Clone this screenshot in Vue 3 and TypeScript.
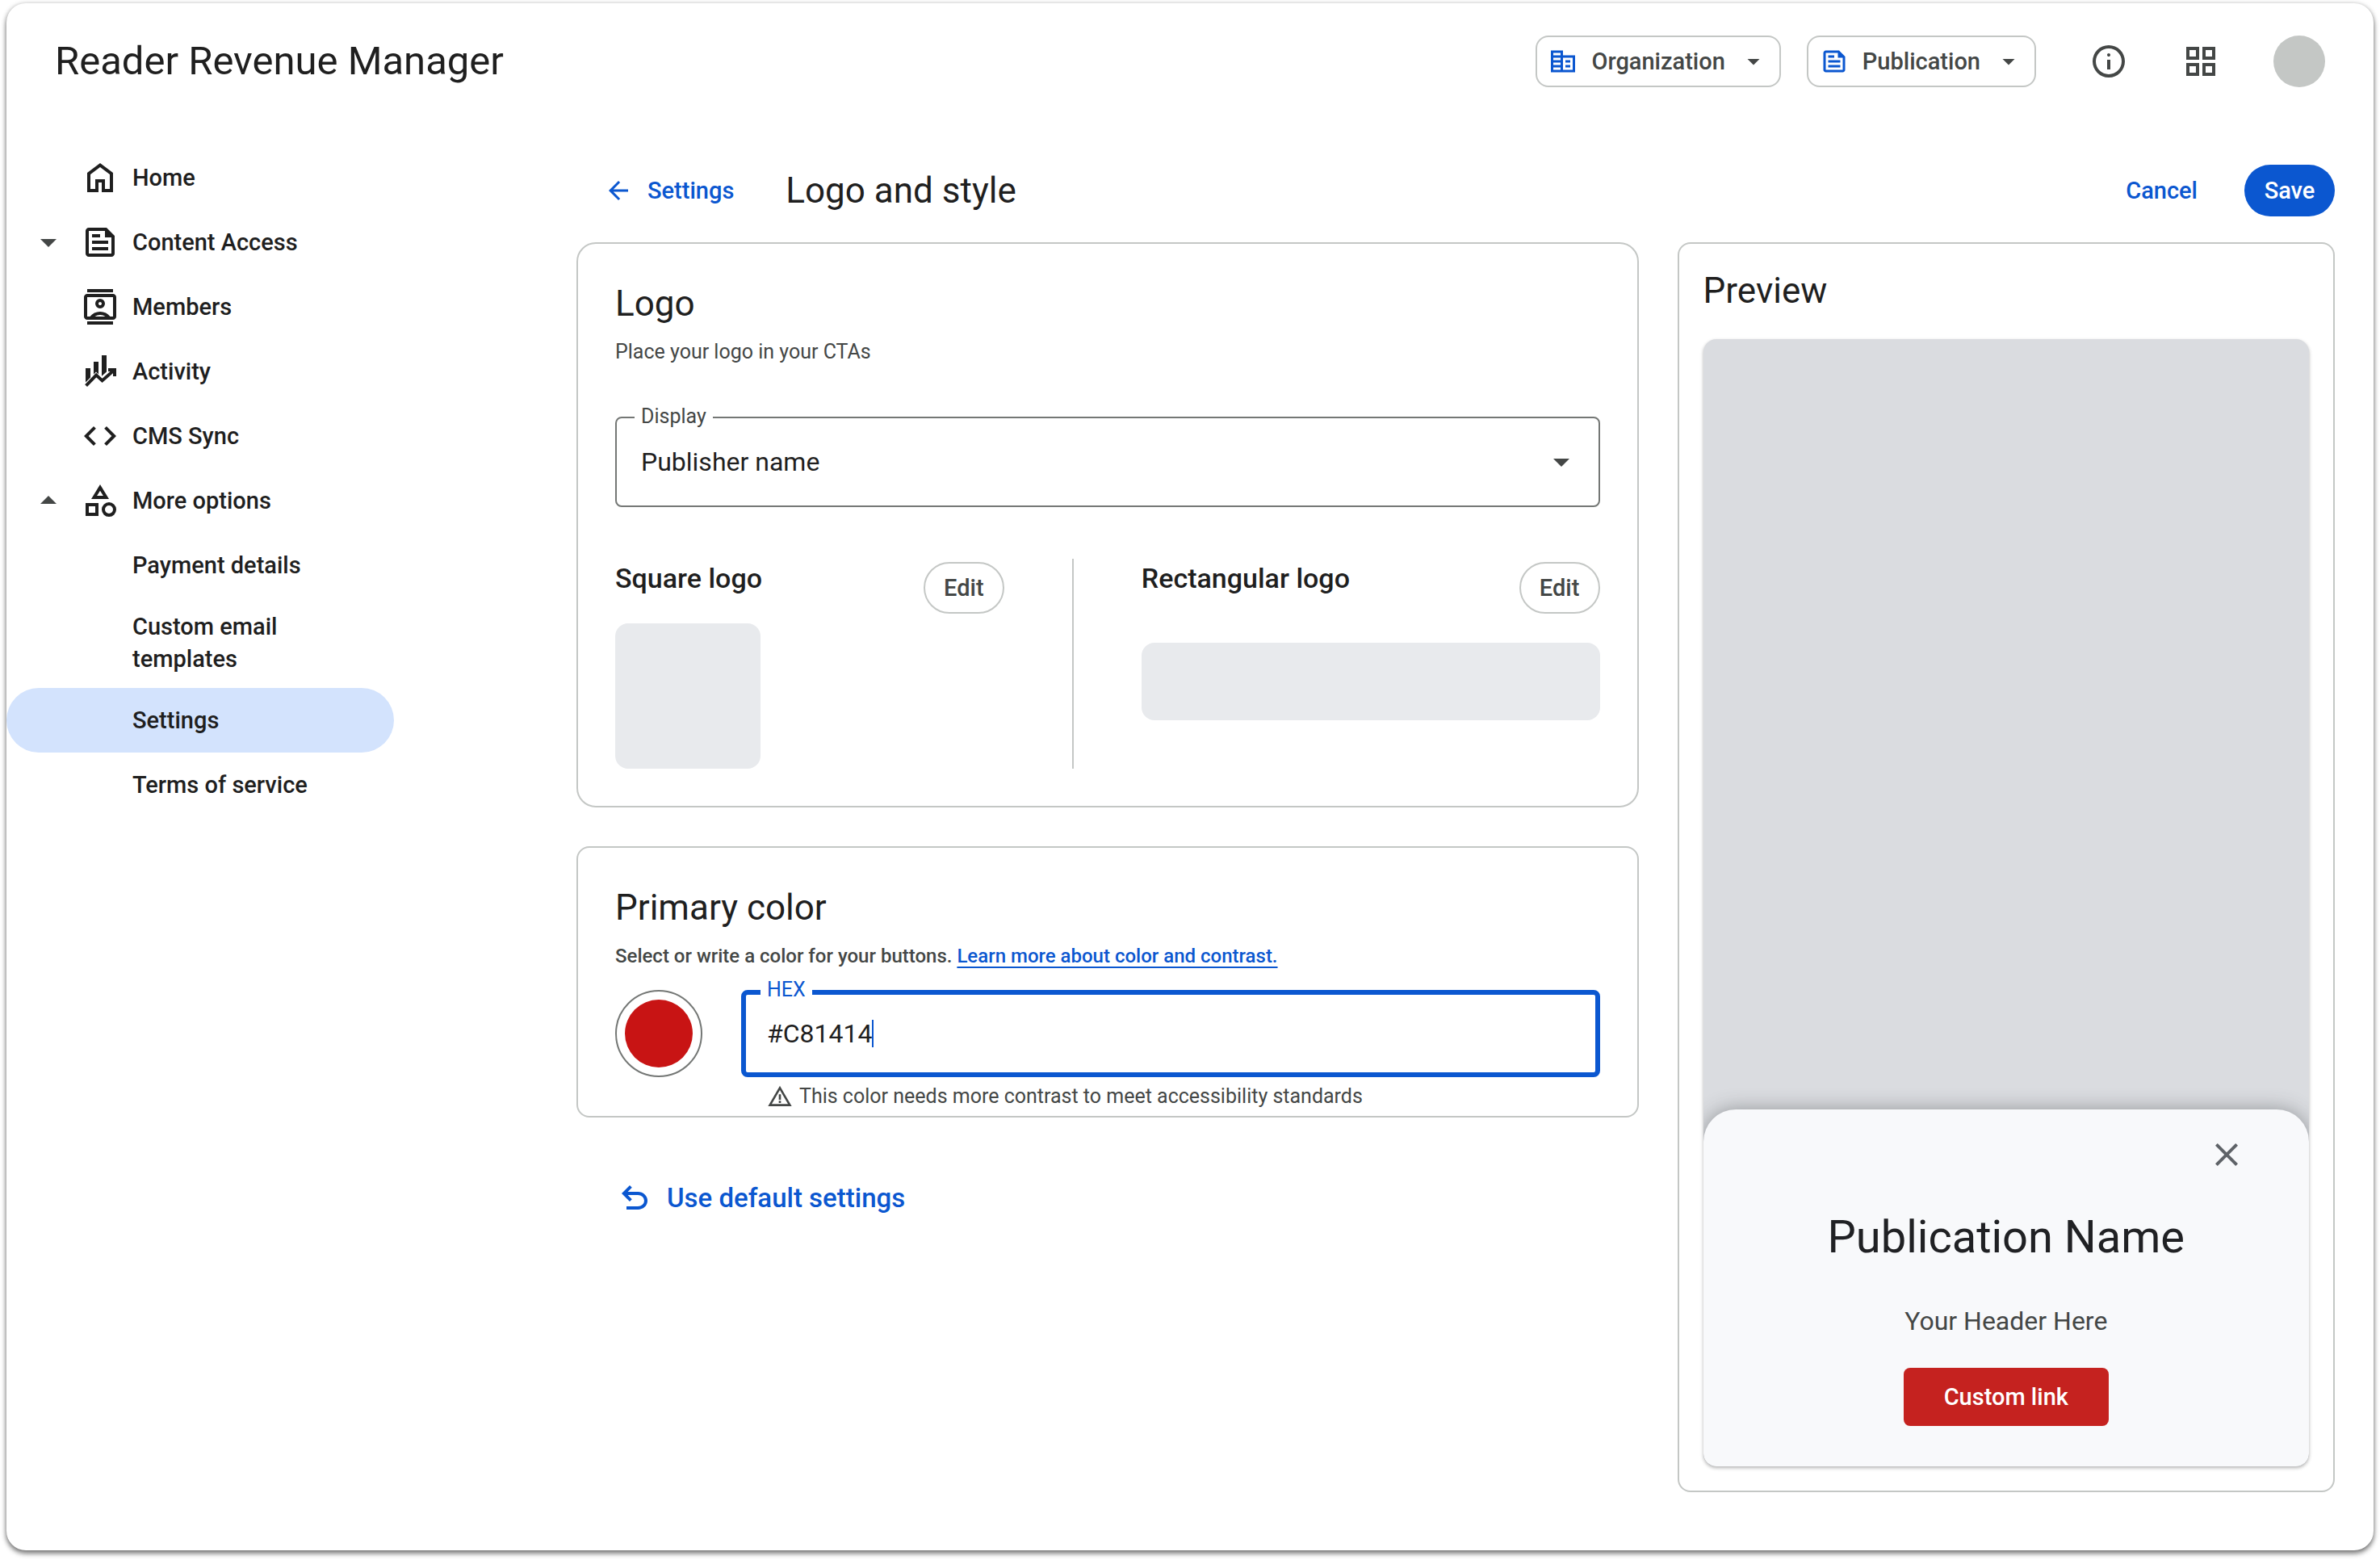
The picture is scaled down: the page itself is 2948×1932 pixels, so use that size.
<script setup lang="ts">
import { ref } from 'vue'

interface NavItem {
  label: string
  icon?: string
  stroke?: string
  arrow?: 'down' | 'up'
  active?: boolean
}

const icons = {
  home: 'M6 19h3v-6h6v6h3v-9l-6-4.5L6 10zm-2 2V9l8-6 8 6v12h-7v-6h-2v6z',
  feed: 'M16 3H5q-.83 0-1.41.59T3 5v14q0 .83.59 1.41T5 21h14q.83 0 1.41-.59T21 19V8zm3 16H5V5h10v4h4zM7 17h10v-2H7zm5-10H7v2h5zm-5 6h10v-2H7z',
  contacts:
    'M4 23v-2h16v2zM4 3V1h16v2zm8 10q1.25 0 2.125-.875T15 10t-.875-2.125T12 7t-2.125.875T9 10t.875 2.125T12 13m-8 7q-.825 0-1.412-.587T2 18V6q0-.825.588-1.412T4 4h16q.825 0 1.413.588T22 6v12q0 .825-.587 1.413T20 20zm1.75-2q1.125-1.4 2.725-2.2T12 15t3.525.8T18.25 18H20V6H4v12zm2.95 0h6.6q-.725-.475-1.55-.737T12 17t-1.75.263T8.7 18M12 11q-.425 0-.712-.288T11 10t.288-.712T12 9t.713.288T13 10t-.288.713T12 11',
  finance: 'M3 18.7V10h3v5.7zM8 13.7V6h3v7.7l-1.5-1.4zM13 14.9V2h3v10.2zM17 10h5v5h-2v-3h-3z',
  code: 'M8 18l-6-6 6-6 1.425 1.425-4.6 4.6L9.4 16.6zm8 0-1.425-1.425 4.6-4.6L14.6 7.4 16 6l6 6z',
  category:
    'M6.5 11 12 2l5.5 9zm11 11q-1.875 0-3.187-1.312T13 17.5t1.313-3.187T17.5 13t3.188 1.313T22 17.5t-1.312 3.188T17.5 22M3 21.5v-8h8v8zM17.5 20q1.05 0 1.775-.725T20 17.5t-.725-1.775T17.5 15t-1.775.725T15 17.5t.725 1.775T17.5 20M5 19.5h4v-4H5zM10.05 9h3.9L12 5.85z',
  domain:
    'M2 21V3h10v4h10v14zm2-2h6v-2H4zm0-4h6v-2H4zm0-4h6V9H4zm0-4h6V5H4zm8 12h8V9h-8zm2-6v-2h4v2zm0 4v-2h4v2z',
  info: 'M11 17h2v-6h-2zm1-8q.425 0 .713-.288T13 8t-.288-.712T12 7t-.712.288T11 8t.288.713T12 9m0 13q-2.075 0-3.9-.788t-3.175-2.137T2.788 15.9 2 12t.788-3.9 2.137-3.175T8.1 2.788 12 2t3.9.788 3.175 2.137T21.213 8.1 22 12t-.788 3.9-2.137 3.175-3.175 2.138T12 22m0-2q3.35 0 5.675-2.325T20 12t-2.325-5.675T12 4 6.325 6.325 4 12t2.325 5.675T12 20',
  grid: 'M3 11V3h8v8zm0 10v-8h8v8zm10-10V3h8v8zm0 10v-8h8v8zM5 9h4V5H5zm10 0h4V5h-4zm0 10h4v-4h-4zM5 19h4v-4H5z',
  back: 'm7.825 13 5.6 5.6L12 20l-8-8 8-8 1.425 1.4-5.6 5.6H20v2z',
  undo: 'M7 19v-2h7.1q1.575 0 2.738-1T18 13.5T16.838 11 14.1 10H7.8l2.6 2.6L9 14 4 9l5-5 1.4 1.4L7.8 8h6.3q2.425 0 4.163 1.575T20 13.5t-1.737 3.925T14.1 19z',
  warning: 'M1 21 12 2l11 19zm3.45-2h15.1L12 6zM11 18h2v-2h-2zm0-3h2v-5h-2z',
  close: 'M6.4 19 5 17.6l5.6-5.6L5 6.4 6.4 5l5.6 5.6L17.6 5 19 6.4 13.4 12l5.6 5.6-1.4 1.4-5.6-5.6z',
  down: 'm12 15-5-5h10z',
  up: 'm7 14 5-5 5 5z',
}

const nav: NavItem[] = [
  { label: 'Home', icon: icons.home },
  { label: 'Content Access', icon: icons.feed, arrow: 'down' },
  { label: 'Members', icon: icons.contacts },
  { label: 'Activity', icon: icons.finance, stroke: 'M3.3 20.8 9.6 14.3l3.7 3.4L21 10.9' },
  { label: 'CMS Sync', icon: icons.code },
  { label: 'More options', icon: icons.category, arrow: 'up' },
  { label: 'Payment details' },
  { label: 'Custom email templates' },
  { label: 'Settings', active: true },
  { label: 'Terms of service' },
]

const display = ref('Publisher name')
const hex = ref('#C81414')
</script>

<template>
  <div class="window">
    <header class="topbar">
      <h1>Reader Revenue Manager</h1>
      <button class="picker" type="button">
        <svg class="i36 blue" viewBox="0 0 24 24"><path :d="icons.domain" /></svg>
        <span>Organization</span>
        <svg class="i36" viewBox="0 0 24 24"><path :d="icons.down" /></svg>
      </button>
      <button class="picker" type="button">
        <svg class="i36 blue" viewBox="0 0 24 24"><path :d="icons.feed" /></svg>
        <span>Publication</span>
        <svg class="i36" viewBox="0 0 24 24"><path :d="icons.down" /></svg>
      </button>
      <div class="tools">
        <button class="bare" type="button" aria-label="Information">
          <svg class="i48" viewBox="0 0 24 24"><path :d="icons.info" /></svg>
        </button>
        <button class="bare" type="button" aria-label="Apps">
          <svg class="i48" viewBox="0 0 24 24"><path :d="icons.grid" /></svg>
        </button>
        <button class="bare avatar" type="button" aria-label="Account"></button>
      </div>
    </header>

    <div class="body">
      <nav>
        <a v-for="item in nav" :key="item.label" href="#" :class="['nav-item', { active: item.active }]">
          <span class="slot">
            <svg v-if="item.arrow" class="i48 muted" viewBox="0 0 24 24"><path :d="icons[item.arrow]" /></svg>
          </span>
          <span class="slot">
            <svg v-if="item.icon" class="i48" viewBox="0 0 24 24">
              <path :d="item.icon" />
              <path v-if="item.stroke" :d="item.stroke" fill="none" stroke="currentColor" stroke-width="2" />
            </svg>
          </span>
          <span class="nav-label">{{ item.label }}</span>
        </a>
      </nav>

      <main>
        <div class="page-head">
          <a class="back" href="#">
            <svg class="i36" viewBox="0 0 24 24"><path :d="icons.back" /></svg>
            <span>Settings</span>
          </a>
          <h2>Logo and style</h2>
          <button class="bare cancel" type="button">Cancel</button>
          <button class="save" type="button">Save</button>
        </div>

        <div class="columns">
          <div class="forms">
            <section class="card logo-card">
              <h2>Logo</h2>
              <p class="note">Place your logo in your CTAs</p>

              <div class="field display-field">
                <label for="display">Display</label>
                <select id="display" v-model="display">
                  <option>Publisher name</option>
                </select>
                <svg class="i48 muted" viewBox="0 0 24 24"><path :d="icons.down" /></svg>
              </div>

              <div class="logos">
                <div class="square">
                  <div class="logo-head">
                    <h3>Square logo</h3>
                    <button class="edit" type="button">Edit</button>
                  </div>
                  <div class="swatch-square"></div>
                </div>
                <div class="divider"></div>
                <div class="rect">
                  <div class="logo-head">
                    <h3>Rectangular logo</h3>
                    <button class="edit" type="button">Edit</button>
                  </div>
                  <div class="swatch-rect"></div>
                </div>
              </div>
            </section>

            <section class="card color-card">
              <h2>Primary color</h2>
              <p class="note medium">
                Select or write a color for your buttons.
                <a href="#">Learn more about color and contrast.</a>
              </p>
              <div class="color-row">
                <button class="color-dot" type="button" aria-label="Pick a color">
                  <span :style="{ background: hex }"></span>
                </button>
                <div class="color-input">
                  <div class="field hex-field">
                    <label for="hex">HEX</label>
                    <input id="hex" v-model="hex" type="text" spellcheck="false" />
                    <span class="caret"></span>
                  </div>
                  <p class="helper">
                    <svg viewBox="0 0 24 24"><path :d="icons.warning" /></svg>
                    <span>This color needs more contrast to meet accessibility standards</span>
                  </p>
                </div>
              </div>
            </section>

            <button class="bare reset" type="button">
              <svg class="i48" viewBox="0 0 24 24"><path :d="icons.undo" /></svg>
              <span>Use default settings</span>
            </button>
          </div>

          <section class="card preview">
            <h2>Preview</h2>
            <div class="phone">
              <div class="sheet">
                <button class="bare close" type="button" aria-label="Close">
                  <svg class="i48" viewBox="0 0 24 24"><path :d="icons.close" /></svg>
                </button>
                <h3>Publication Name</h3>
                <p>Your Header Here</p>
                <button class="cta" type="button">Custom link</button>
              </div>
            </div>
          </section>
        </div>
      </main>
    </div>
  </div>
</template>

<style>
html,
body {
  background: #fff;
}
#app {
  display: flow-root;
}
</style>

<style scoped>
.window,
.window * {
  box-sizing: border-box;
}
.window {
  display: flex;
  flex-direction: column;
  min-height: calc(100vh - 16px);
  margin: 4px 8px 12px;
  border-radius: 24px;
  background: #fff;
  box-shadow: 0 4px 6px rgba(0, 0, 0, 0.45), 0 1px 6px rgba(0, 0, 0, 0.25);
  color: #1f1f1f;
  font-family: Roboto, "Liberation Sans", sans-serif;
  font-size: 29px;
  font-weight: 500;
  line-height: 40px;
}
h1,
h2,
h3,
p {
  margin: 0;
  font-weight: 400;
}
button,
input,
select {
  font: inherit;
  color: inherit;
}
button {
  cursor: pointer;
}
a {
  color: #0b57d0;
  text-decoration: none;
}
svg {
  display: block;
  flex: none;
  fill: currentColor;
}
.i36 {
  width: 36px;
  height: 36px;
}
.i48 {
  width: 48px;
  height: 48px;
}
.blue {
  color: #0b57d0;
}
.muted {
  color: #444746;
}
.bare {
  border: 0;
  padding: 0;
  background: none;
}

/* Top bar */
.topbar {
  display: flex;
  align-items: center;
  padding: 40px 60px 0;
  color: #444746;
}
h1 {
  flex: 1;
  color: #1f1f1f;
  font-size: 49px;
  line-height: 64px;
}
.picker {
  display: flex;
  align-items: center;
  gap: 17px;
  height: 64px;
  margin-right: 32px;
  padding: 0 14px;
  border: 2px solid #c4c7c5;
  border-radius: 16px;
  background: none;
}
.tools {
  display: flex;
  align-items: center;
  gap: 66px;
  margin-left: 34px;
}
.avatar {
  width: 64px;
  height: 64px;
  border-radius: 50%;
  background: #c4c7c5;
}

/* Navigation */
.body {
  flex: 1;
  display: flex;
}
nav {
  flex: none;
  width: 480px;
  padding-top: 72px;
}
.nav-item {
  display: flex;
  align-items: center;
  gap: 16px;
  min-height: 80px;
  padding: 16px 80px 16px 28px;
  border-radius: 40px;
  color: #1f1f1f;
}
.nav-item.active {
  background: #d3e3fd;
}
.slot {
  flex: none;
  width: 48px;
}

/* Page */
main {
  flex: 1;
  display: flex;
  flex-direction: column;
  padding: 96px 48px 72px 226px;
}
h2 {
  font-size: 44px;
  line-height: 56px;
}
.page-head {
  display: flex;
  align-items: center;
  height: 64px;
  padding-left: 34px;
}
.page-head h2 {
  flex: 1;
  margin-left: 64px;
}
.back {
  display: flex;
  align-items: center;
  gap: 18px;
}
.cancel {
  margin-right: 58px;
  color: #0b57d0;
}
.save {
  width: 112px;
  height: 64px;
  border: 0;
  border-radius: 32px;
  background: #0b57d0;
  color: #fff;
}
.columns {
  flex: 1;
  display: grid;
  grid-template-columns: minmax(0, 21fr) minmax(0, 13fr);
  gap: 48px;
  margin-top: 32px;
}
.card {
  border: 2px solid #c4c7c5;
  border-radius: 16px;
}
.logo-card {
  padding: 46px;
  border-radius: 24px;
}
.note {
  margin-top: 16px;
  color: #444746;
  font-size: 25px;
  line-height: 32px;
}

/* Outlined fields */
.field {
  position: relative;
  display: flex;
  align-items: center;
  border: 2px solid #747775;
  border-radius: 8px;
  font-size: 32px;
  font-weight: 400;
}
.field label {
  position: absolute;
  top: -18px;
  left: 22px;
  padding: 0 8px;
  background: #fff;
  color: #444746;
  font-size: 25px;
  line-height: 32px;
}
.field select,
.field input {
  border: 0;
  outline: 0;
  padding: 0;
  background: none;
  appearance: none;
}
.display-field {
  height: 112px;
  margin-top: 64px;
}
.display-field select {
  flex: 1;
  align-self: stretch;
  padding-left: 30px;
}
.display-field svg {
  margin-right: 22px;
  pointer-events: none;
}

.logos {
  display: flex;
  gap: 84px;
  height: 260px;
  margin-top: 64px;
}
.square {
  flex: 482 1 0;
}
.rect {
  flex: 568 1 0;
}
.divider {
  width: 2px;
  background: #c4c7c5;
}
.logo-head {
  display: flex;
  justify-content: space-between;
  height: 80px;
}
.logo-head h3 {
  font-size: 34px;
  font-weight: 500;
  line-height: 48px;
}
.edit {
  width: 100px;
  height: 64px;
  margin-top: 4px;
  border: 2px solid #c4c7c5;
  border-radius: 32px;
  padding: 0;
  background: none;
  color: #444746;
}
.swatch-square {
  width: 180px;
  height: 180px;
  border-radius: 16px;
  background: #e8eaed;
}
.swatch-rect {
  height: 96px;
  margin-top: 24px;
  border-radius: 16px;
  background: #e8eaed;
}

/* Primary color */
.color-card {
  margin-top: 48px;
  padding: 46px 46px 0;
}
.medium {
  font-size: 24px;
  font-weight: 500;
}
.medium a {
  text-decoration: underline;
  text-decoration-thickness: 2px;
  text-underline-offset: 5px;
}
.color-row {
  display: flex;
  gap: 48px;
  margin-top: 26px;
}
.color-dot {
  display: flex;
  flex: none;
  width: 108px;
  height: 108px;
  padding: 10px;
  border: 2px solid #747775;
  border-radius: 50%;
  background: none;
}
.color-dot span {
  flex: 1;
  align-self: stretch;
  border-radius: 50%;
}
.color-input {
  flex: 1;
}
.hex-field {
  height: 108px;
  border: 6px solid #0b57d0;
  padding-left: 26px;
}
.hex-field label {
  top: -22px;
  left: 18px;
  color: #0b57d0;
}
.hex-field input {
  field-sizing: content;
}
.caret {
  width: 2px;
  height: 34px;
  background: #0b57d0;
}
.helper {
  display: flex;
  align-items: center;
  gap: 8px;
  height: 48px;
  padding-left: 32px;
  color: #444746;
  font-size: 25px;
}
.helper svg {
  width: 32px;
  height: 32px;
}
.reset {
  display: flex;
  align-items: center;
  gap: 16px;
  margin: 76px 0 0 48px;
  color: #0b57d0;
  font-size: 33px;
}

/* Preview */
.preview {
  display: flex;
  flex-direction: column;
  padding: 30px;
}
.phone {
  flex: 1;
  display: flex;
  flex-direction: column;
  justify-content: flex-end;
  margin-top: 32px;
  border-radius: 16px;
  background: #dadce0;
  box-shadow: 0 2px 4px rgba(0, 0, 0, 0.3);
  overflow: clip;
}
.sheet {
  display: flex;
  flex-direction: column;
  align-items: center;
  padding: 32px 78px 50px;
  border-radius: 40px 40px 16px 16px;
  background: #f8f9fb;
  box-shadow: 0 0 24px rgba(60, 64, 67, 0.45);
}
.close {
  align-self: flex-end;
  color: #5f6368;
}
.sheet h3 {
  margin-top: 42px;
  color: #202124;
  font-size: 56px;
  line-height: 72px;
}
.sheet p {
  margin-top: 48px;
  color: #444746;
  font-size: 32px;
  line-height: 40px;
}
.cta {
  width: 254px;
  height: 72px;
  margin-top: 38px;
  border: 0;
  border-radius: 8px;
  background: #c5221f;
  color: #fff;
}
</style>
